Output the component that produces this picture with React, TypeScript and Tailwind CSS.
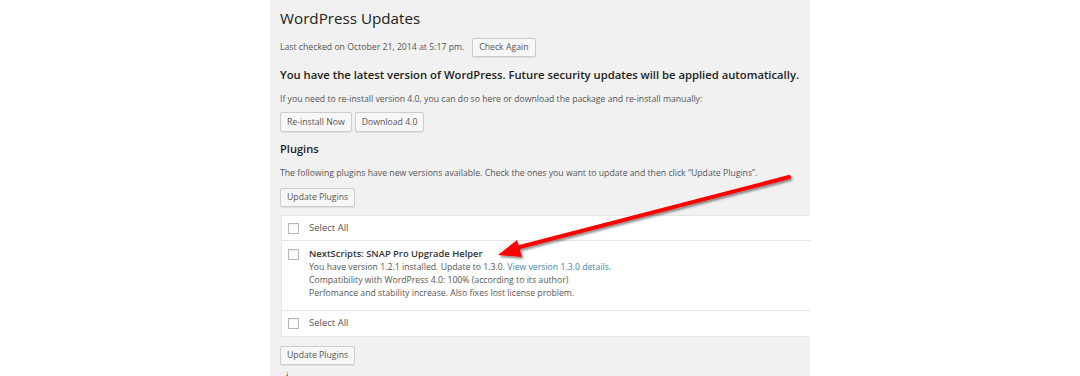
import React from "react";

const Btn = ({ children, className = "" }: { children: React.ReactNode; className?: string }) => (
  <button
    className={
      "h-[19px] rounded-[2px] border border-[#cccccc] bg-[#f7f7f7] px-[6px] text-[8.7px] leading-none text-[#555] shadow-[0_1px_0_#e0e0e0] " +
      className
    }
  >
    {children}
  </button>
);

const Check = () => (
  <span className="block h-[11px] w-[11px] shrink-0 border border-[#b4b9be] bg-white shadow-[inset_0_1px_2px_rgba(0,0,0,0.07)]" />
);

export default function App() {
  return (
    <div
      className="relative h-[376px] w-[1080px] overflow-hidden bg-white"
      style={{ fontFamily: '"Open Sans", "Noto Sans", sans-serif' }}
    >
      <div className="ml-[270px] h-[376px] w-[540px] bg-[#f1f1f1] pl-[10px] text-[#555]">
        <h1 className="pt-[5px] text-[15.2px] leading-[26px] text-[#222]">WordPress Updates</h1>
        <div className="mt-[7px] flex items-center gap-[8px] text-[8.7px]">
          <span>Last checked on October 21, 2014 at 5:17 pm.</span>
          <Btn>Check Again</Btn>
        </div>
        <h2 className="mt-[9px] whitespace-nowrap text-[11.25px] font-semibold leading-[18px] text-[#222]">
          You have the latest version of WordPress. Future security updates will be applied automatically.
        </h2>
        <p className="mt-[9px] whitespace-nowrap text-[8.7px] leading-[12px]">
          If you need to re-install version 4.0, you can do so here or download the package and re-install manually:
        </p>
        <div className="mt-[7px] flex gap-[3px]">
          <Btn className="h-[20px]">Re-install Now</Btn>
          <Btn className="h-[20px]">Download 4.0</Btn>
        </div>
        <h3 className="mt-[8px] text-[11.1px] font-semibold leading-[18px] text-[#222]">Plugins</h3>
        <p className="mt-[9px] whitespace-nowrap text-[8.7px] leading-[12px]">
          The following plugins have new versions available. Check the ones you want to update and then click “Update Plugins”.
        </p>
        <Btn className="mt-[9px]">Update Plugins</Btn>
        <div className="ml-px mt-[8px] border border-r-0 border-[#e5e5e5] bg-white text-[8.7px]">
          <div className="flex h-[25px] items-center gap-[10px] border-b border-[#e5e5e5] pl-[6px] text-[9.5px]">
            <Check />
            <span>Select All</span>
          </div>
          <div className="flex h-[70px] gap-[10px] border-b border-[#e5e5e5] pl-[6px] pt-[6px]">
            <div className="pt-[2px]">
              <Check />
            </div>
            <div className="leading-[13px]">
              <div className="text-[9.4px] font-semibold text-[#333]">NextScripts: SNAP Pro Upgrade Helper</div>
              <div className="mt-px">
                You have version 1.2.1 installed. Update to 1.3.0.{" "}
                <span className="text-[#3f86ae]">View version 1.3.0 details.</span>
              </div>
              <div>Compatibility with WordPress 4.0: 100% (according to its author)</div>
              <div>Perfomance and stability increase. Also fixes lost license problem.</div>
            </div>
          </div>
          <div className="flex h-[25px] items-center gap-[10px] pl-[6px] text-[9.5px]">
            <Check />
            <span>Select All</span>
          </div>
        </div>
        <Btn className="mt-[9px]">Update Plugins</Btn>
        <div className="mt-[6px] pl-[6px] text-[9px] leading-[10px] text-[#222]">i</div>
      </div>
      <svg className="pointer-events-none absolute left-0 top-0" width="1080" height="376">
        <defs>
          <filter id="sh" x="-10%" y="-50%" width="120%" height="200%">
            <feDropShadow dx="1.5" dy="2" stdDeviation="1" floodColor="#000" floodOpacity="0.45" />
          </filter>
        </defs>
        <g filter="url(#sh)">
          <line x1="789" y1="177" x2="512" y2="249" stroke="#ff0000" strokeWidth="4" strokeLinecap="round" />
          <polygon points="498,255 517,240 522,257" fill="#ff0000" />
        </g>
      </svg>
    </div>
  );
}
